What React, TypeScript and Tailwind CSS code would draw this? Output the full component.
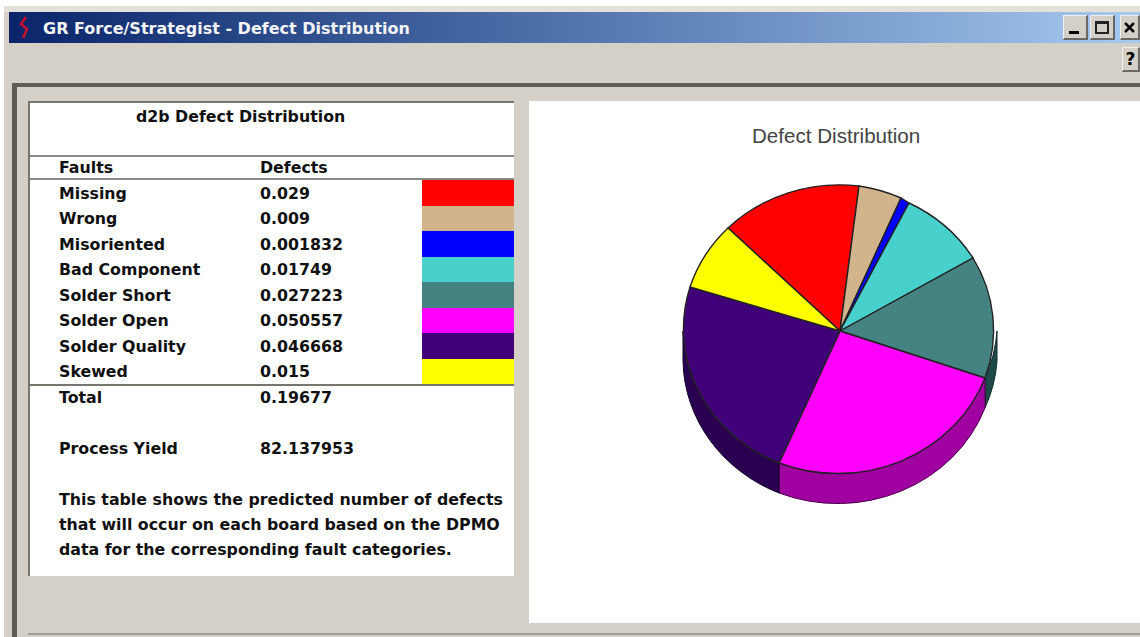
import React from "react";
import { X } from "lucide-react";

const faults = [
  { name: "Missing", value: "0.029", color: "#ff0000" },
  { name: "Wrong", value: "0.009", color: "#d2b48c" },
  { name: "Misoriented", value: "0.001832", color: "#0000ff" },
  { name: "Bad Component", value: "0.01749", color: "#48d1cc" },
  { name: "Solder Short", value: "0.027223", color: "#458383" },
  { name: "Solder Open", value: "0.050557", color: "#ff00ff" },
  { name: "Solder Quality", value: "0.046668", color: "#400078" },
  { name: "Skewed", value: "0.015", color: "#ffff00" },
];

// Pie geometry in the chart panel's own coordinates
const cx = 311;
const cy = 230;
const rx = 157;
const ry = 146;
const depth = 30;

const wedges = [
  { fill: "#ff0000", from: [199, 127], to: [330, 85] },
  { fill: "#d2b48c", from: [330, 85], to: [372, 97] },
  { fill: "#0000ff", from: [372, 97], to: [380, 102] },
  { fill: "#48d1cc", from: [380, 102], to: [444, 157] },
  { fill: "#458383", from: [444, 157], to: [456, 277] },
  { fill: "#ff00ff", from: [456, 277], to: [250, 362] },
  { fill: "#400078", from: [250, 362], to: [161, 186] },
  { fill: "#ffff00", from: [161, 186], to: [199, 127] },
];

function wedgePath(from: number[], to: number[]) {
  return `M${cx} ${cy}L${from[0]} ${from[1]}A${rx} ${ry} 0 0 1 ${to[0]} ${to[1]}Z`;
}

function sidePath(from: number[], to: number[]) {
  return `M${from[0]} ${from[1]}A${rx} ${ry} 0 0 1 ${to[0]} ${to[1]}L${to[0]} ${to[1] + depth}A${rx} ${ry} 0 0 0 ${from[0]} ${from[1] + depth}Z`;
}

function PieChart() {
  return (
    <svg width="611" height="430" viewBox="0 49 611 430" className="block">
      <path d={sidePath([468, 230], [456, 277])} fill="#1f4a4a" stroke="#102828" strokeWidth="1" />
      <path d={sidePath([456, 277], [250, 362])} fill="#a000a0" stroke="#4a004a" strokeWidth="1" />
      <path d={sidePath([250, 362], [154, 230])} fill="#2a0050" stroke="#14002a" strokeWidth="1" />
      {wedges.map((w) => (
        <path key={w.fill} d={wedgePath(w.from, w.to)} fill={w.fill} stroke="#222" strokeWidth="1.4" />
      ))}
    </svg>
  );
}

function Row({ name, value, color }: { name: string; value: string; color?: string }) {
  return (
    <div className="flex h-[25.5px] items-center">
      <span className="w-[230px] pl-[29px] pt-[2px]">{name}</span>
      <span className="w-[162px] pt-[2px]">{value}</span>
      {color ? <span className="h-full w-[92px]" style={{ backgroundColor: color }} /> : null}
    </div>
  );
}

function WinButton({ children, width }: { children: React.ReactNode; width: string }) {
  return (
    <div
      className={`flex h-[25px] ${width} items-center justify-center border-t border-l border-t-[#f2f0ec] border-l-[#f2f0ec] border-r-2 border-b-2 border-r-[#6a6864] border-b-[#6a6864] bg-[#d4d0c8] text-black`}
    >
      {children}
    </div>
  );
}

export default function App() {
  return (
    <div
      className="h-[637px] w-[1140px] overflow-hidden bg-white pt-[6px] pl-[4px] text-[15.8px] font-bold text-[#111]"
      style={{ fontFamily: '"DejaVu Sans", "Noto Sans", sans-serif' }}
    >
      <div className="h-[631px] border-t-[6px] border-t-[#e4e1da] bg-[#d4d0c8] pl-[5px]">
        <header className="flex h-[31px] items-center justify-between bg-gradient-to-r from-[#0a246a] to-[#a6caf0] pl-[7px]">
          <div className="flex items-center text-[16px] text-[#f4f4f8]">
            <svg width="16" height="24" viewBox="0 0 16 24" className="mr-[11px]">
              <path d="M10 1 L5 8 L11 13 L7 22" fill="none" stroke="#c8102e" strokeWidth="2.5" />
            </svg>
            <span className="pt-[3px]">GR Force/Strategist - Defect Distribution</span>
          </div>
          <div className="flex items-center">
            <WinButton width="w-[25px]">
              <span className="mt-[10px] mr-[2px] h-[3px] w-[10px] bg-black" />
            </WinButton>
            <div className="ml-[2px]">
              <WinButton width="w-[25px]">
                <span className="h-[13px] w-[14px] border-2 border-t-[3px] border-[#222]" />
              </WinButton>
            </div>
            <div className="ml-[5px]">
              <WinButton width="w-[20px]">
                <X size={15} strokeWidth={4} />
              </WinButton>
            </div>
          </div>
        </header>

        <div className="flex h-[40px] justify-end pt-[4px]">
          <WinButton width="w-[18px]">
            <span className="text-[17px] leading-none">?</span>
          </WinButton>
        </div>

        <main className="ml-[3px] h-[554px] border-t-[4px] border-l-[5px] border-t-[#5e5c58] border-l-[#5e5c58] pl-[11px] pt-[14px]">
          <div className="flex items-start gap-[15px]">
            <section className="h-[475px] w-[486px] border-t-2 border-l-2 border-t-[#77756f] border-l-[#77756f] bg-white">
              <h1 className="h-[52px] pl-[106px] pt-[2px]">d2b Defect Distribution</h1>
              <div className="flex h-[25px] items-center border-t-2 border-b-2 border-t-[#8a8884] border-b-[#8a8884]">
                <span className="w-[230px] pl-[29px] pt-[1px]">Faults</span>
                <span className="pt-[1px]">Defects</span>
              </div>
              {faults.map((f) => (
                <Row key={f.name} {...f} />
              ))}
              <div className="flex h-[25.5px] items-center border-t-2 border-[#77756f]">
                <span className="w-[230px] pl-[29px]">Total</span>
                <span>0.19677</span>
              </div>
              <div className="h-[25.5px]" />
              <Row name="Process Yield" value="82.137953" />
              <p className="mt-[26px] w-[484px] pl-[29px] leading-[25px]">
                This table shows the predicted number of defects that will occur on each board based on the DPMO data for the corresponding fault categories.
              </p>
            </section>

            <section className="h-[522px] flex-1 bg-white">
              <h2
                className="pt-[21px] pl-[223px] text-[20.6px] font-normal leading-[28px] text-[#444]"
                style={{ fontFamily: '"Liberation Sans", sans-serif' }}
              >
                Defect Distribution
              </h2>
              <PieChart />
            </section>
          </div>
          <div className="mt-[10px] h-[2px] bg-[#a09e98]" />
        </main>
      </div>
    </div>
  );
}
